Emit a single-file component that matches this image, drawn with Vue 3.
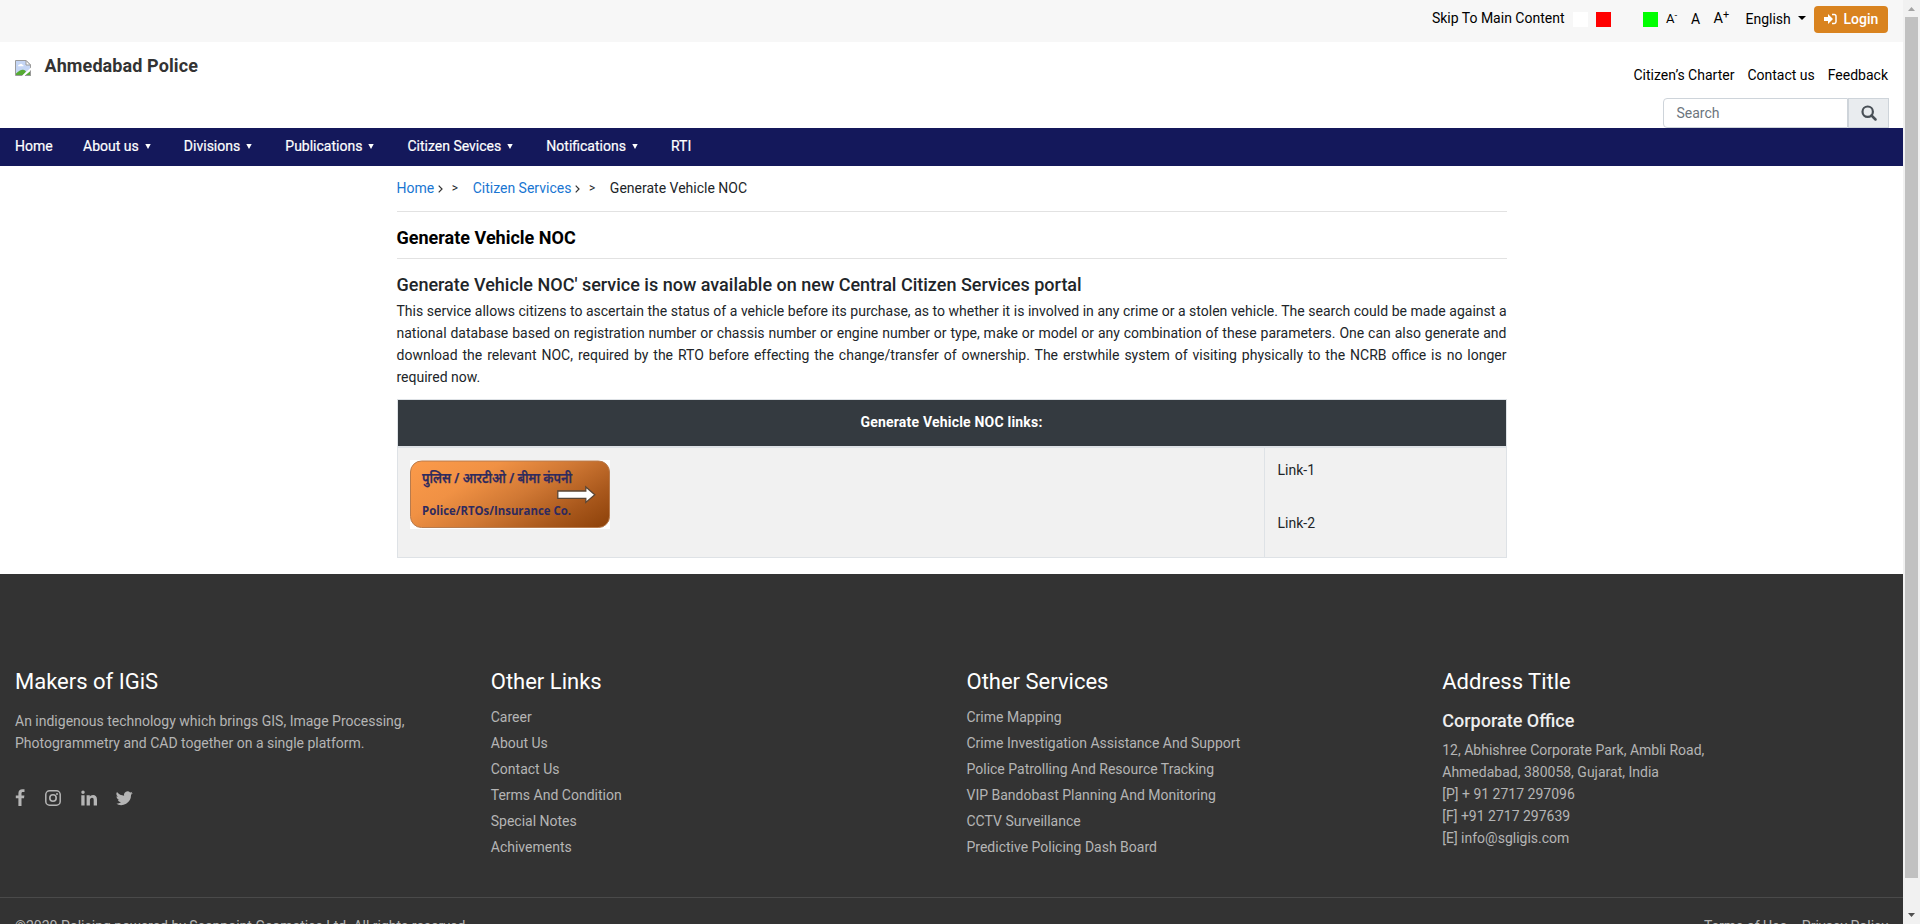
<script setup>
const nav = [
  { label: 'Home' },
  { label: 'About us', menu: true },
  { label: 'Divisions', menu: true },
  { label: 'Publications', menu: true },
  { label: 'Citizen Sevices', menu: true },
  { label: 'Notifications', menu: true },
  { label: 'RTI' },
]
const otherLinks = ['Career', 'About Us', 'Contact Us', 'Terms And Condition', 'Special Notes', 'Achivements']
const services = [
  'Crime Mapping',
  'Crime Investigation Assistance And Support',
  'Police Patrolling And Resource Tracking',
  'VIP Bandobast Planning And Monitoring',
  'CCTV Surveillance',
  'Predictive Policing Dash Board',
]
</script>

<template>
  <div class="window">
    <div class="page">
      <div class="topbar">
        <a class="skip">Skip To Main Content</a>
        <i class="swatch white"></i>
        <i class="swatch red"></i>
        <i class="swatch green"></i>
        <a class="size small">A<sup>-</sup></a>
        <a class="size mid">A</a>
        <a class="size large">A<sup>+</sup></a>
        <a class="lang">English<i class="caret"></i></a>
        <a class="login">
          <svg width="13" height="12" viewBox="0 0 13 12">
            <path d="M0 4h4V1l5 5-5 5V8H0z" fill="#fff" />
            <path d="M8 1.500h2.300a1.700 1.700 0 0 1 1.700 1.700v5.600a1.700 1.700 0 0 1-1.700 1.700H8" fill="none" stroke="#fff" stroke-width="1.500" />
          </svg>
          <span>Login</span>
        </a>
      </div>

      <header class="header">
        <div class="brand">
          <svg class="broken" width="16" height="16" viewBox="0 0 16 16">
            <path d="M.5 .5H11L15.500 5v10.500H.5z" fill="#c5d6f5" stroke="#9a9a9a" />
            <path d="M11 .5V5h4.500z" fill="#fff" stroke="#9a9a9a" />
            <path d="M3 6.200c0-1 .8-1.700 1.800-1.700C5.300 3.400 7 3.500 7.300 4.700c1 0 1.400.7 1.200 1.500z" fill="#fff" />
            <path d="M1 15v-1.500C3.500 11 6 9.500 8 9.700c1.800.2 2.800 1.200 3 2L8 15z" fill="#56ab33" />
            <path d="M6.800 16L16 7.500V10.500L10.200 16z" fill="#fff" />
            <path d="M10 15.500h5.500V11z" fill="#56ab33" />
            <path d="M10 15.500h5.500V10.500" fill="none" stroke="#9a9a9a" />
          </svg>
          <span class="name">Ahmedabad Police</span>
        </div>
        <div class="tools">
          <div class="quick"><a>Citizen’s Charter</a><a>Contact us</a><a>Feedback</a></div>
          <div class="search">
            <div class="field">Search</div>
            <div class="go">
              <svg width="16" height="16" viewBox="0 0 16 16">
                <circle cx="6.700" cy="6.700" r="5.200" fill="none" stroke="#495057" stroke-width="2.200" />
                <path d="M10.500 10.500l4 4" stroke="#495057" stroke-width="2.500" stroke-linecap="round" />
              </svg>
            </div>
          </div>
        </div>
      </header>

      <nav class="nav">
        <a v-for="n in nav" :key="n.label">{{ n.label }}<svg v-if="n.menu" width="6" height="5" viewBox="0 0 6 5"><path d="M.3 0h5.400L3 5z" fill="#fff" /></svg></a>
      </nav>

      <main class="content">
        <div class="crumbs">
          <a class="link">Home</a><svg class="angle" width="5" height="8" viewBox="0 0 5 8"><path d="M.7 .7L4 4 .7 7.300" fill="none" stroke="#333" stroke-width="1.200" /></svg><span class="gt">&gt;</span>
          <a class="link">Citizen Services</a><svg class="angle" width="5" height="8" viewBox="0 0 5 8"><path d="M.7 .7L4 4 .7 7.300" fill="none" stroke="#333" stroke-width="1.200" /></svg><span class="gt">&gt;</span>
          <span>Generate Vehicle NOC</span>
        </div>
        <h1>Generate Vehicle NOC</h1>
        <h2>Generate Vehicle NOC' service is now available on new Central Citizen Services portal</h2>
        <p class="intro">This service allows citizens to ascertain the status of a vehicle before its purchase, as to whether it is involved in any crime or a stolen vehicle. The search could be made against a national database based on registration number or chassis number or engine number or type, make or model or any combination of these parameters. One can also generate and download the relevant NOC, required by the RTO before effecting the change/transfer of ownership. The erstwhile system of visiting physically to the NCRB office is no longer required now.</p>
        <div class="table">
          <div class="thead">Generate Vehicle NOC links:</div>
          <div class="row">
            <div class="cell first">
              <svg width="200" height="69" viewBox="0 0 200 69">
                <defs>
                  <linearGradient id="orange" gradientUnits="userSpaceOnUse" x1="55" y1="-30" x2="135" y2="102">
                    <stop offset="0" stop-color="#fb9a4a" />
                    <stop offset=".3" stop-color="#f09144" />
                    <stop offset=".55" stop-color="#d07834" />
                    <stop offset=".8" stop-color="#a9581c" />
                    <stop offset="1" stop-color="#8f430b" />
                  </linearGradient>
                </defs>
                <rect width="200" height="69" fill="#fff" />
                <rect x=".5" y="1" width="199" height="66.500" rx="11" fill="url(#orange)" stroke="#b87b4d" />
                <text class="hindi" x="12" y="22.500" textLength="150" lengthAdjust="spacingAndGlyphs">पुलिस / आरटीओ / बीमा कंपनी</text>
                <text class="eng" x="12" y="54.500" textLength="149" lengthAdjust="spacingAndGlyphs">Police/RTOs/Insurance Co.</text>
                <path d="M147.800 31h28v-4l9 7.700-9 7.700v-4h-28z" fill="#fff" stroke="#5a4534" stroke-width="1.300" />
              </svg>
            </div>
            <div class="cell second"><span>Link-1</span><span>Link-2</span></div>
          </div>
        </div>
      </main>

      <footer class="footer">
        <div class="cols">
          <section>
            <h3>Makers of IGiS</h3>
            <p class="about">An indigenous technology which brings GIS, Image Processing, Photogrammetry and CAD together on a single platform.</p>
            <div class="social">
              <svg width="10" height="18" viewBox="0 0 10 18"><path d="M9.500 .3v2.700H8C6.700 3 6.500 3.600 6.500 4.500v1.900h2.900L9 9.300H6.500V17H3.400V9.300H.8V6.400h2.600V4.200C3.400 1.600 5 .2 7.300 .2c1 0 1.900 0 2.200.1z" fill="#b5b5b5" /></svg>
              <svg width="16" height="18" viewBox="0 0 16 18"><rect x=".8" y="1.800" width="14.400" height="14.400" rx="3.800" fill="none" stroke="#b5b5b5" stroke-width="1.500" /><circle cx="8" cy="9" r="3.200" fill="none" stroke="#b5b5b5" stroke-width="1.600" /><circle cx="12" cy="5" r="1" fill="#b5b5b5" /></svg>
              <svg width="16" height="18" viewBox="0 0 16 18"><path d="M.3 6.200h3.300V16.500H.3zM2 1.500a1.750 1.750 0 1 1 0 3.500 1.750 1.750 0 0 1 0-3.500zM5.600 6.200h3.200v1.500C9.300 6.800 10.400 6 12 6c2.500 0 4 1.600 4 4.600v5.900h-3.300V11c0-1.400-.5-2.300-1.700-2.300s-2.100 1-2.100 2.300v5.500H5.600z" fill="#b5b5b5" /></svg>
              <svg class="bird" width="17" height="18" viewBox="0 0 24 24"><path d="M23.600 4.900c-.9.4-1.800.6-2.800.8a4.900 4.900 0 0 0 2.200-2.700c-1 .6-2 1-3.100 1.200a4.900 4.900 0 0 0-8.400 4.500A14 14 0 0 1 1.400 3.500a4.900 4.900 0 0 0 1.500 6.600c-.8 0-1.600-.3-2.200-.6 0 2.400 1.600 4.400 3.900 4.900-.7.200-1.500.2-2.200.1a4.900 4.900 0 0 0 4.600 3.400A10 10 0 0 1 0 19.900a14 14 0 0 0 21.200-12.500c.9-.7 1.800-1.500 2.400-2.500z" fill="#b5b5b5" /></svg>
            </div>
          </section>
          <section>
            <h3>Other Links</h3>
            <ul><li v-for="l in otherLinks" :key="l">{{ l }}</li></ul>
          </section>
          <section>
            <h3>Other Services</h3>
            <ul><li v-for="l in services" :key="l">{{ l }}</li></ul>
          </section>
          <section>
            <h3>Address Title</h3>
            <h4>Corporate Office</h4>
            <address>12, Abhishree Corporate Park, Ambli Road,<br>Ahmedabad, 380058, Gujarat, India<br>[P] + 91 2717 297096<br>[F] +91 2717 297639<br>[E] info@sgligis.com</address>
          </section>
        </div>
        <div class="legal">
          <span>©2020 Policing powered by Scanpoint Geomatics Ltd. All rights reserved</span>
          <div class="terms"><a>Terms of Use</a><a>Privacy Policy</a></div>
        </div>
      </footer>
    </div>

    <div class="scrollbar">
      <svg width="17" height="17" viewBox="0 0 17 17"><path d="M5 11h7L8.500 7z" fill="#a3a3a3" /></svg>
      <div class="thumb"></div>
      <svg class="down" width="17" height="17" viewBox="0 0 17 17"><path d="M5 6h7l-3.500 4z" fill="#505050" /></svg>
    </div>
  </div>
</template>

<style>
html, body { margin: 0; overflow: hidden; }
</style>

<style scoped>
* { box-sizing: border-box; }
.window { display: flex; width: 1920px; height: 924px; overflow: hidden; font: 14px/22px Roboto, "Noto Sans", sans-serif; color: #212529; background: #fff; }
.page { width: 1903px; height: 924px; overflow: hidden; }
.topbar { height: 42px; background: #f7f7f7; display: flex; justify-content: flex-end; padding: 0 15px 0 0; color: #000; }
.skip { margin: 7px 8.500px 0 0; }
.swatch { width: 15px; height: 15px; margin-top: 12px; }
.white { background: #fff; margin-right: 8px; }
.red { background: #f00; margin-right: 32px; }
.green { background: #0f0; margin-right: 8px; }
.size { margin-top: 8px; }
.size sup { font-size: 75%; line-height: 0; vertical-align: baseline; position: relative; top: -.5em; }
.small { font-size: 13px; width: 25px; }
.mid { width: 22.500px; font-size: 14px; }
.large { width: 32px; font-size: 14.500px; }
.lang { margin-top: 8px; width: 68.500px; display: flex; }
.caret { width: 0; height: 0; border: 4px solid transparent; border-top-color: #000; border-bottom: 0; margin: 8px 0 0 7px; }
.login { width: 74px; height: 27px; margin-top: 6px; border-radius: 4px; background: #d9831f; color: #fff; display: flex; align-items: center; padding: 0 0 1px 9.500px; gap: 7px; font-weight: 500; }
.header { height: 86px; display: flex; justify-content: space-between; padding: 0 15px; }
.brand { display: flex; }
.broken { margin-top: 18px; }
.name { font-size: 18px; font-weight: 700; color: #333; margin: 13px 0 0 13.500px; letter-spacing: .1px; }
.tools { display: flex; flex-direction: column; align-items: flex-end; }
.quick { display: flex; gap: 13px; margin-top: 22px; color: #000; }
.search { display: flex; margin: 12px -1px 0 0; height: 30px; }
.field { width: 185px; border: 1px solid #ced4da; border-radius: 4px 0 0 4px; padding: 3px 12.500px; color: #6c757d; background: #fff; }
.go { width: 41px; border: 1px solid #ced4da; background: #e9ecef; display: flex; justify-content: center; align-items: center; }
.nav { height: 38px; background: #14185b; color: #fff; display: flex; padding: 7px 15px 0; gap: 30.400px; -webkit-text-stroke: .2px #fff; }
.nav svg { margin: 0 2.700px 2px 6px; }
.content { width: 1110px; margin: 0 auto; height: 408px; }
.crumbs { height: 46px; padding-top: 11px; border-bottom: 1px solid #e2e2e2; display: flex; }
.link { color: #1976d2; }
.angle { margin: 8px 0 0 4px; }
.gt { margin: 0 14.700px 0 8.500px; font-size: 12px; }
h1, h2, h3, h4, p, ul { margin: 0; padding: 0; font-weight: 500; }
h1 { height: 47px; font-size: 18px; font-weight: 700; line-height: 22px; padding-top: 15px; border-bottom: 1px solid #e2e2e2; color: #000; }
h2 { font-size: 18px; line-height: 22px; padding-top: 15px; }
.intro { margin-top: 4px; font-weight: 400; text-align: justify; }
.table { margin-top: 11px; border: 1px solid #dee2e6; height: 159px; }
.thead { height: 48px; border-bottom: 2px solid #dee2e6; background: #343a40; color: #fff; font-weight: 700; text-align: center; padding-top: 11px; letter-spacing: .2px; }
.row { display: flex; height: 109px; background: #f1f1f1; }
.first { width: 867px; border-right: 1px solid #dee2e6; padding: 12px; }
.second { padding: 11px 13px; display: flex; flex-direction: column; gap: 31px; }
.hindi { font: 600 15px "Noto Sans", sans-serif; fill: #2e2a5e; stroke: #2e2a5e; stroke-width: .25px; }
.eng { font: 700 12.500px "Open Sans", sans-serif; fill: #2e2a5e; }
.footer { background: #333; color: #b5b5b5; height: 400px; }
.cols { display: grid; grid-template-columns: repeat(4, 1fr); height: 324px; padding-top: 94px; border-bottom: 1px solid #4a4a4a; }
section { padding: 0 15px; }
h3 { font-size: 22px; line-height: 28px; font-weight: 400; color: #fff; }
.about { width: 420px; padding-top: 14px; font-weight: 400; }
.social { display: flex; margin-top: 35px; gap: 20px; }
.bird { margin-left: -1px; }
ul { list-style: none; padding-top: 8px; font-weight: 400; }
li { height: 26px; line-height: 26px; }
h4 { font-size: 18px; line-height: 22px; color: #eee; margin-top: 14px; }
address { font-style: normal; margin-top: 7px; }
.legal { display: flex; justify-content: space-between; padding: 17px 15px 0; }
.terms { display: flex; gap: 15px; }
.scrollbar { width: 17px; background: #f1f1f1; display: flex; flex-direction: column; }
.thumb { height: 861px; width: 13px; margin-left: 2px; background: #c1c1c1; }
.down { margin-top: auto; }
</style>
